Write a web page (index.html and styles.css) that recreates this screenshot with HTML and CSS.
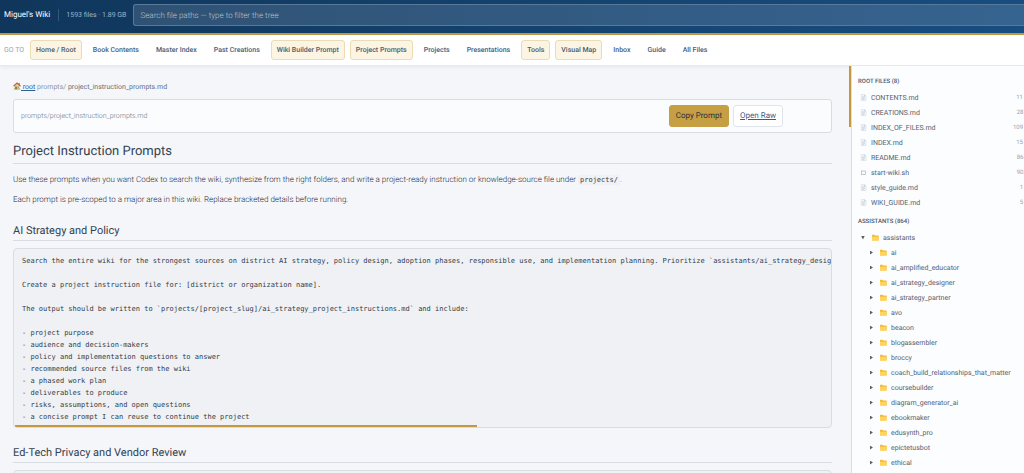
FILE: index.html
```html
<!DOCTYPE html>
<html lang="en">
<head>
  <meta charset="UTF-8">
  <meta name="viewport" content="width=device-width, initial-scale=1.0">
  <title>Miguel's Wiki</title>
  <link rel="stylesheet" href="styles.css">
</head>
<body>
  <!-- Shared icons -->
  <svg class="sprite" aria-hidden="true">
    <symbol id="icon-file" viewBox="0 0 14 14">
      <path d="M2.5 1h6.5l3 3v9h-9.500z" fill="#f1f6fa" stroke="#c3ced8" stroke-width=".8"/>
      <path d="M9 1v3h3" fill="#b9d4ea" stroke="#c3ced8" stroke-width=".8"/>
      <path d="M4 5.500h6M4 7.500h6M4 9.500h6M4 11.300h4" stroke="#a9bdcd" stroke-width=".8"/>
    </symbol>
    <symbol id="icon-box" viewBox="0 0 14 14">
      <rect x="3" y="4" width="8" height="7" fill="none" stroke="#9aa4b0" stroke-width="1.200"/>
    </symbol>
    <symbol id="icon-folder" viewBox="0 0 14 14">
      <path d="M0 2.500q0-1 1-1h4l1.500 1.500h6q1 0 1 1v8q0 1-1 1h-11.500q-1 0-1-1z" fill="#f3b93c"/>
      <path d="M0 5.500h14l-1 7.500h-12q-1 0-1-1z" fill="#ffd55e"/>
    </symbol>
    <symbol id="icon-home" viewBox="0 0 16 16">
      <path d="M3 7v7.500h10V7L8 3z" fill="#f0cf9a"/>
      <path d="M1 8.500 8 2l7 6.500" fill="none" stroke="#c65f35" stroke-width="2.200"/>
      <path d="M11 2h2.200v4L11 4z" fill="#a3583c"/>
      <path d="M4.500 9h3v5.500h-3z" fill="#8d5b3c"/>
      <path d="M9 9h3v3H9z" fill="#6fb1dc"/>
      <path d="M1.500 14h13" stroke="#6ea04a" stroke-width="1.500"/>
    </symbol>
  </svg>

  <!-- Top Bar -->
  <header class="topbar">
    <span class="brand">Miguel's Wiki</span>
    <span class="stats">1593 files · 1.89 GB</span>
    <input class="search" type="search" aria-label="Search file paths" placeholder="Search file paths — type to filter the tree">
  </header>

  <!-- Quick Links -->
  <nav class="quicknav">
    <span class="nav-label">GO TO</span>
    <a class="nav-link pinned" href="#">Home / Root</a>
    <a class="nav-link" href="#">Book Contents</a>
    <a class="nav-link" href="#">Master Index</a>
    <a class="nav-link" href="#">Past Creations</a>
    <a class="nav-link pinned" href="#">Wiki Builder Prompt</a>
    <a class="nav-link pinned" href="#">Project Prompts</a>
    <a class="nav-link" href="#">Projects</a>
    <a class="nav-link" href="#">Presentations</a>
    <a class="nav-link pinned" href="#">Tools</a>
    <a class="nav-link pinned" href="#">Visual Map</a>
    <a class="nav-link" href="#">Inbox</a>
    <a class="nav-link" href="#">Guide</a>
    <a class="nav-link" href="#">All Files</a>
  </nav>

  <div class="layout">
    <!-- Document -->
    <main class="content">
      <div class="breadcrumb">
        <a href="#"><svg class="icon-home"><use href="#icon-home"/></svg> root</a>
        <span>prompts/</span>
        <span class="current">project_instruction_prompts.md</span>
      </div>

      <div class="file-bar">
        <span class="file-path">prompts/project_instruction_prompts.md</span>
        <div class="file-actions">
          <button class="btn btn-gold" type="button">Copy Prompt</button>
          <a class="btn btn-plain" href="#">Open Raw</a>
        </div>
      </div>

      <article class="doc">
        <h1>Project Instruction Prompts</h1>
        <p>Use these prompts when you want Codex to search the wiki, synthesize from the right folders, and write a project-ready instruction or knowledge-source file under <code>projects/</code>.</p>
        <p>Each prompt is pre-scoped to a major area in this wiki. Replace bracketed details before running.</p>

        <h2>AI Strategy and Policy</h2>
        <div class="code-block">
<pre>Search the entire wiki for the strongest sources on district AI strategy, policy design, adoption phases, responsible use, and implementation planning. Prioritize `assistants/ai_strategy_desig

Create a project instruction file for: [district or organization name].

The output should be written to `projects/[project_slug]/ai_strategy_project_instructions.md` and include:

- project purpose
- audience and decision-makers
- policy and implementation questions to answer
- recommended source files from the wiki
- a phased work plan
- deliverables to produce
- risks, assumptions, and open questions
- a concise prompt I can reuse to continue the project</pre>
          <div class="scroll-x"></div>
        </div>

        <h2>Ed-Tech Privacy and Vendor Review</h2>
        <div class="code-block">
          <pre></pre>
        </div>
      </article>
    </main>
    <div class="scroll-y"></div>

    <!-- File Tree -->
    <aside class="sidebar">
      <h3>ROOT FILES (8)</h3>
      <ul class="files">
        <li><svg class="icon"><use href="#icon-file"/></svg><span>CONTENTS.md</span><span class="size">11 KB</span></li>
        <li><svg class="icon"><use href="#icon-file"/></svg><span>CREATIONS.md</span><span class="size">287 B</span></li>
        <li><svg class="icon"><use href="#icon-file"/></svg><span>INDEX_OF_FILES.md</span><span class="size">109 KB</span></li>
        <li><svg class="icon"><use href="#icon-file"/></svg><span>INDEX.md</span><span class="size">15 KB</span></li>
        <li><svg class="icon"><use href="#icon-file"/></svg><span>README.md</span><span class="size">864 B</span></li>
        <li><svg class="icon"><use href="#icon-box"/></svg><span>start-wiki.sh</span><span class="size">903 B</span></li>
        <li><svg class="icon"><use href="#icon-file"/></svg><span>style_guide.md</span><span class="size">1 KB</span></li>
        <li><svg class="icon"><use href="#icon-file"/></svg><span>WIKI_GUIDE.md</span><span class="size">5 KB</span></li>
      </ul>

      <h3>ASSISTANTS (864)</h3>
      <ul class="tree">
        <li><span class="arrow open"></span><svg class="icon"><use href="#icon-folder"/></svg><span>assistants</span></li>
      </ul>
      <ul class="tree nested">
        <li><span class="arrow"></span><svg class="icon"><use href="#icon-folder"/></svg><span>ai</span></li>
        <li><span class="arrow"></span><svg class="icon"><use href="#icon-folder"/></svg><span>ai_amplified_educator</span></li>
        <li><span class="arrow"></span><svg class="icon"><use href="#icon-folder"/></svg><span>ai_strategy_designer</span></li>
        <li><span class="arrow"></span><svg class="icon"><use href="#icon-folder"/></svg><span>ai_strategy_partner</span></li>
        <li><span class="arrow"></span><svg class="icon"><use href="#icon-folder"/></svg><span>avo</span></li>
        <li><span class="arrow"></span><svg class="icon"><use href="#icon-folder"/></svg><span>beacon</span></li>
        <li><span class="arrow"></span><svg class="icon"><use href="#icon-folder"/></svg><span>blogassembler</span></li>
        <li><span class="arrow"></span><svg class="icon"><use href="#icon-folder"/></svg><span>broccy</span></li>
        <li><span class="arrow"></span><svg class="icon"><use href="#icon-folder"/></svg><span>coach_build_relationships_that_matter</span></li>
        <li><span class="arrow"></span><svg class="icon"><use href="#icon-folder"/></svg><span>coursebuilder</span></li>
        <li><span class="arrow"></span><svg class="icon"><use href="#icon-folder"/></svg><span>diagram_generator_ai</span></li>
        <li><span class="arrow"></span><svg class="icon"><use href="#icon-folder"/></svg><span>ebookmaker</span></li>
        <li><span class="arrow"></span><svg class="icon"><use href="#icon-folder"/></svg><span>edusynth_pro</span></li>
        <li><span class="arrow"></span><svg class="icon"><use href="#icon-folder"/></svg><span>epictetusbot</span></li>
        <li><span class="arrow"></span><svg class="icon"><use href="#icon-folder"/></svg><span>ethical</span></li>
      </ul>
    </aside>
  </div>
</body>
</html>
```

FILE: styles.css
```css
/* General Styles */
* {
  box-sizing: border-box;
}

body {
  display: flex;
  flex-direction: column;
  height: 100vh;
  margin: 0;
  overflow: hidden;
  background-color: #f4f6fa;
  color: #566170;
  font-family: Roboto, sans-serif;
  font-size: 7px;
  line-height: 12px;
  text-rendering: geometricPrecision;
}

.sprite {
  display: none;
}

/* Top Bar */
.topbar {
  display: flex;
  flex: none;
  align-items: center;
  padding: 4px 0 7px 4px;
  background: linear-gradient(90deg, #10365b, #184d80);
  border-bottom: 2px solid #c29a45;
}

.brand {
  padding-right: 8px;
  border-right: 1px solid #35577a;
  color: #ffffff;
  font-size: 8px;
}

.stats {
  padding: 0 7px;
  color: #9fb4c9;
}

.search {
  flex: 1;
  min-width: 0;
  height: 22px;
  padding: 0 6px;
  border: 1px solid #58799a;
  border-right: 0;
  border-radius: 3px 0 0 3px;
  background-color: rgba(255, 255, 255, 0.13);
  color: #ffffff;
  font-family: inherit;
  font-size: 8px;
  font-weight: 300;
  text-rendering: inherit;
}

.search::placeholder {
  color: #b4c5d5;
}

/* Quick Links */
.quicknav {
  display: flex;
  flex: none;
  align-items: center;
  gap: 5px;
  padding: 5px 4px;
  background-color: #ffffff;
  border-bottom: 1px solid #e6e9ee;
  box-shadow: 0 1px 4px rgba(30, 50, 80, 0.08);
}

.nav-label {
  margin-right: 1px;
  color: #9aa3ae;
}

.nav-link {
  padding: 3px 5px;
  border: 1px solid transparent;
  border-radius: 3px;
  color: #45617f;
  font-weight: 500;
  line-height: 12px;
  text-decoration: none;
}

.nav-link.pinned {
  background-color: #fcf5e4;
  border-color: #ecdcb4;
  color: #4f5c6a;
}

/* Layout */
.layout {
  display: flex;
  flex: 1;
  min-height: 0;
}

.content {
  flex: 1;
  min-width: 0;
  padding: 15px 17px 0 13px;
  overflow: hidden;
}

.scroll-y {
  flex: none;
  width: 2px;
  height: 61px;
  background-color: #c4983f;
}

/* Breadcrumb */
.breadcrumb {
  margin-bottom: 6px;
  color: #8c96a3;
}

.breadcrumb a {
  color: #2f5f8f;
}

.breadcrumb .current {
  color: #667180;
}

.icon-home {
  width: 8px;
  height: 8px;
  vertical-align: -1px;
}

/* File Bar */
.file-bar {
  display: flex;
  align-items: center;
  justify-content: space-between;
  padding: 5px 48px 5px 7px;
  border: 1px solid #d8dde4;
  border-radius: 3px;
  background-color: #fbfcfe;
}

.file-path {
  color: #6c7683;
  font-weight: 300;
}

.file-actions {
  display: flex;
  gap: 4px;
}

.btn {
  padding: 4px 6px;
  border: 1px solid #e0e5ec;
  border-radius: 3px;
  font-family: inherit;
  font-size: 8px;
  line-height: 12px;
  text-rendering: inherit;
}

.btn-gold {
  background-color: #c69f45;
  border-color: #c69f45;
  color: #2d3138;
}

.btn-plain {
  background-color: #ffffff;
  color: #2f5f8f;
}

/* Document */
.doc h1,
.doc h2 {
  border-bottom: 1px solid #d8dde4;
  color: #35424f;
  font-weight: 400;
}

.doc h1 {
  margin: 10px 0;
  padding-bottom: 3px;
  font-size: 13px;
  line-height: 17px;
}

.doc h2 {
  margin: 18px 0 7px;
  padding-bottom: 2px;
  font-size: 11px;
  line-height: 14px;
}

.doc p {
  margin: 0 0 8px;
  color: #1f2b38;
  font-size: 8px;
  font-weight: 300;
}

.doc code,
.doc pre {
  color: #2f3c4a;
  font-family: "DejaVu Sans Mono", monospace;
  font-size: 7px;
}

.doc code {
  padding: 1px 2px;
  border-radius: 2px;
  background-color: #eff1f5;
}

.code-block {
  border: 1px solid #d8dde4;
  border-radius: 4px;
  background-color: #eff1f5;
  overflow: hidden;
}

.doc pre {
  margin: 0;
  padding: 6px 0 2px 8px;
  line-height: 12px;
}

.scroll-x {
  width: 462px;
  height: 2px;
  margin: 0 1px;
  background-color: #c4983f;
}

/* File Tree */
.sidebar {
  flex: none;
  width: 173px;
  padding: 10px 0 0 6px;
  border-left: 1px solid #d8dde4;
  background-color: #fcfdfe;
  overflow: hidden;
}

.sidebar h3 {
  margin: 0;
  color: #45586e;
  font-size: 6px;
  font-weight: 500;
  line-height: 12px;
}

.sidebar ul {
  margin: 0;
  padding: 0;
  list-style: none;
}

.sidebar li {
  display: flex;
  align-items: center;
  gap: 4px;
  height: 15px;
  white-space: nowrap;
}

.files {
  width: 174px;
}

.sidebar .files {
  padding: 2px 0 6px 2px;
}

.sidebar .tree {
  padding-left: 1px;
}

.sidebar h3 + .tree {
  padding-top: 2px;
}

.sidebar .nested {
  padding-left: 9px;
}

.icon {
  flex: none;
  width: 7px;
  height: 7px;
}

.size {
  margin-left: auto;
  color: #9aa4b0;
  font-size: 6px;
}

.arrow {
  width: 9px;
  height: 4px;
  background-color: #55606d;
  clip-path: polygon(33% 0, 66% 50%, 33% 100%);
}

.arrow.open {
  clip-path: polygon(22% 0, 66% 0, 44% 100%);
}
```
